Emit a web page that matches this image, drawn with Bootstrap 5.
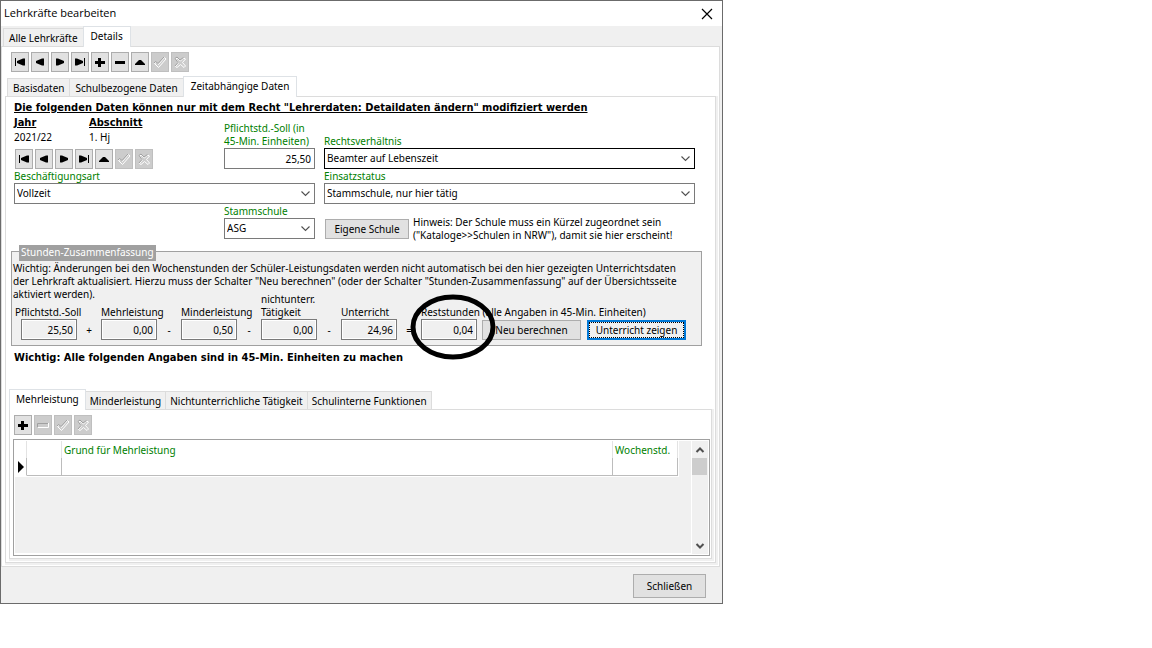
<!DOCTYPE html>
<html lang="de">
<head>
<meta charset="utf-8">
<meta name="viewport" content="width=device-width, initial-scale=1">
<title>Lehrkräfte bearbeiten</title>
<link href="https://cdn.jsdelivr.net/npm/bootstrap@5.3.0/dist/css/bootstrap.min.css" rel="stylesheet">
<style>
  :root { --face: #f0f0f0; --line: #dcdcdc; --edge: #7a7a7a; --btn: #e1e1e1; --btn-edge: #adadad; --green: #008000; }
  body { background: #fff; color: #000; font: 10px/13px "Noto Sans", sans-serif; }
  button, input, select { font: inherit; color: inherit; }
  .dialog { max-width: 723px; border: 1px solid #6b6b6b; background: var(--face); }
  .titlebar { height: 25px; padding: 0 9px 0 3px; background: #fff; }
  .titlebar h1 { font: 11px/23px "Open Sans", sans-serif; margin: 0; }
  .close-x { width: 12px; height: 12px; padding: 0; border: 0; background: none; line-height: 0; }

  /* tab strips */
  .strip { border: 0; align-items: flex-end; padding-left: 3px; height: 20px; flex-wrap: nowrap; }
  .strip.flush { padding-left: 1px; }
  .strip .nav-link { height: 18px; padding: 1px 5px 0; border: 1px solid var(--line); border-bottom: 0; border-radius: 0; margin: 0 0 0 -1px; background: var(--face); color: #000; font-size: 10px; line-height: 16px; white-space: nowrap; }
  .strip.flush .nav-link { padding: 1px 4px 0; }
  .strip .nav-link.active { height: 21px; padding: 0 7px 2px; background: #fff; color: #000; position: relative; z-index: 1; margin-bottom: -1px; }
  .strip.flush .nav-link.active { padding: 0 6px 2px; }
  .pane { border: 1px solid var(--line); background: #fff; }
  .pane-main { margin-right: 2px; padding: 5px 3px 3px; }
  .pane-main > .tools { margin: 0 6px 4px; }
  .pane-time { padding: 3px 3px 3px; box-shadow: 1px 1px 0 1px var(--face); clip-path: inset(0 -2px -2px 0); }
  .pane-load { padding: 5px 1px 2px 3px; box-shadow: 1px 1px 0 1px var(--face); clip-path: inset(0 -2px -2px 0); }

  /* record navigator */
  .tools { gap: 2px; }
  .form-rows .tools, .pane-load .tools { padding-left: 1px; }
  .tool { width: 18px; height: 20px; padding: 0; border: 1px solid var(--btn-edge); background: var(--btn); line-height: 0; display: flex; align-items: center; justify-content: center; }
  .tool:disabled { background: #ccc; border-color: #bfbfbf; }
  .tool svg { width: 16px; height: 16px; flex: none; }

  .strong-line { font: 700 11px/15px "DejaVu Sans Condensed", "Noto Sans", sans-serif; margin: 0 5px; }
  .years { line-height: 15px; border-collapse: collapse; margin-bottom: 4px; }
  .years th { width: 75px; padding: 0; text-decoration: underline; font: 700 11px/15px "DejaVu Sans Condensed", "Noto Sans", sans-serif; }
  .years td { padding: 0; }
  .form-rows { display: grid; grid-template-columns: 210px 91px 1fr; row-gap: 1px; margin: 0 17px 9px 5px; }
  .form-rows > .wide { grid-column: span 2; }
  .form-rows > .second { grid-column: 2; }
  .form-rows > .third { margin-left: 9px; }
  .green { color: var(--green); display: block; }
  .field { display: block; width: 100%; height: 21px; border: 1px solid var(--edge); border-radius: 0; padding: 0 3px; background-color: #fff; text-align: right; }
  select.field { text-align: left; padding: 0 18px 0 2px; line-height: 19px; color: #000; font-size: 10px; background-position: right 3px center; background-size: 11px 11px; background-image: url("data:image/svg+xml,%3Csvg xmlns='http://www.w3.org/2000/svg' viewBox='0 0 11 11'%3E%3Cpath fill='none' stroke='%23505050' stroke-width='1.1' d='M1.5 3.500l4 4 4-4'/%3E%3C/svg%3E"); }
  select.field.focused { border-color: #000; }
  .push { height: 20px; border: 1px solid var(--btn-edge); border-radius: 0; background: var(--btn); padding: 0; line-height: 16px; color: #000; font-size: 10px; white-space: nowrap; }
  .push.default { border: 2px solid #0078d7; outline: 1px dotted #000; outline-offset: -3px; line-height: 14px; }
  .own-school { width: 84px; margin: 3px 4px 0 1px; }
  .hint-cell { padding-top: 11px; }

  /* summary of hours */
  .summary { position: relative; border: 1px solid #a0a0a0; background: var(--face); padding: 10px 1px 5px; margin: 0 10px 4px 2px; }
  .summary legend { position: absolute; top: -7px; left: 7px; float: none; width: auto; margin: 0; padding: 0 2px 1px; background: #a0a0a0; color: #fff; font-size: 10px; line-height: 15px; }
  .sum-row { margin: -8px 14px 0 8px; }
  .sum-item { width: 56px; position: relative; }
  .sum-item label { display: block; white-space: nowrap; }
  .sum-item label.outdent { margin-left: -6px; }
  .sum-item .field { background: var(--face); box-shadow: inset 0 0 0 1px #fff; }
  .op { width: 24px; text-align: center; line-height: 19px; }
  .ring { position: absolute; left: -11px; top: -12px; width: 86px; height: 66px; pointer-events: none; z-index: 2; }
  .recalc { width: 99px; margin-left: 5px; }
  .show { width: 99px; margin-left: 6px; }

  /* data grid */
  .load-tabs { margin: 24px 0 0; }
  .grid-box { border: 1px solid #a0a0a0; background: #fff; height: 117px; padding: 1px; margin-top: 4px; }
  .grid-area { background: var(--face); border: 1px solid #fff; border-width: 0 1px 1px 0; }
  .data-grid { width: calc(100% - 12px); table-layout: fixed; border-collapse: separate; border-spacing: 0; background: #fff; border-right: 1px solid #fff; border-bottom: 1px solid #fff; }
  .data-grid th { height: 17px; padding: 2px 0 0 2px; font-weight: 400; color: var(--green); border-right: 1px solid #e3e3e3; line-height: 15px; white-space: nowrap; }
  .data-grid td { height: 18px; padding: 0; border-right: 1px solid #bcbcbc; border-bottom: 1px solid #bcbcbc; line-height: 0; }
  .data-grid td.pointer { border-bottom-color: #fff; }
  .c-mark { width: 12px; } .c-no { width: 35px; } .c-std { width: 65px; }
  .vbar { width: 16px; background: var(--face); }
  .vbar .thumb { height: 17px; background: #cdcdcd; width: 15px; }
  .vbar button { border: 0; background: none; padding: 0; width: 16px; height: 17px; line-height: 0; }
  .actions { padding: 7px 16px 5px; }
  .actions .push { width: 73px; height: 24px; }
</style>
</head>
<body>
<svg class="d-none" xmlns="http://www.w3.org/2000/svg">
  <symbol id="i-first" viewBox="0 0 16 16"><path d="M3 4h1v8H3zM13 4.500v7h-2L5 9V7l6-2.500z"/></symbol>
  <symbol id="i-prev" viewBox="0 0 16 16"><path d="M12 4.500v7h-2L4 9V7l6-2.500z"/></symbol>
  <symbol id="i-next" viewBox="0 0 16 16"><path d="M4 4.500v7h2L12 9V7L6 4.500z"/></symbol>
  <symbol id="i-last" viewBox="0 0 16 16"><path d="M12 4h1v8h-1zM3 4.500v7h2L11 9V7L5 4.500z"/></symbol>
  <symbol id="i-plus" viewBox="0 0 16 16"><path d="M6 4h3v3h4v3H9v3H6v-3H3V7h3z"/></symbol>
  <symbol id="i-minus" viewBox="0 0 16 16"><path d="M3 7h10v3H3z"/></symbol>
  <symbol id="i-up" viewBox="0 0 16 16"><path d="M7 6h2l4 4v1H3v-1z"/></symbol>
  <symbol id="i-minus-off" viewBox="0 0 16 16"><path fill="none" stroke="#fff" d="M3 10.500h10.500V6"/><path fill="none" stroke="#a0a0a0" d="M2.500 10v-3.500H13"/></symbol>
  <symbol id="i-check" viewBox="0 0 16 16"><path fill="#ccc" stroke="#fff" d="M2.500 9.500l2-1 2 2 6-7 1.500 1.500-7.500 8.500z"/><path fill="none" stroke="#a0a0a0" d="M2 9l1.500-1.500 2.500 2L12 3"/></symbol>
  <symbol id="i-cross" viewBox="0 0 16 16"><path fill="#ccc" stroke="#fff" d="M3.500 4.500h2l3 2.500 3-3 2 1L10.500 8.500l3 3.500-1.500 1.500-3.500-3-3.500 3-1.500-1L6.500 9z"/><path fill="none" stroke="#a0a0a0" d="M6 8.500l-3-4L5 3l3 3 3.500-2.500M3 12l3-3.500"/></symbol>
</svg>

<main class="dialog">
  <header class="titlebar d-flex align-items-start justify-content-between">
    <h1>Lehrkräfte bearbeiten</h1>
    <button class="close-x align-self-center" type="button" aria-label="Fenster schließen"><svg width="12" height="12" viewBox="0 0 12 12"><path d="M1 1l10 10M11 1L1 11" stroke="#000" stroke-width="1.200"/></svg></button>
  </header>

  <nav class="nav nav-tabs strip" aria-label="Ansicht">
    <button class="nav-link" type="button">Alle Lehrkräfte</button>
    <button class="nav-link active" type="button">Details</button>
  </nav>

  <section class="pane pane-main">
    <div class="tools d-flex" role="toolbar" aria-label="Lehrkraft">
      <button class="tool" type="button" aria-label="Erster"><svg><use href="#i-first"/></svg></button>
      <button class="tool" type="button" aria-label="Voriger"><svg><use href="#i-prev"/></svg></button>
      <button class="tool" type="button" aria-label="Nächster"><svg><use href="#i-next"/></svg></button>
      <button class="tool" type="button" aria-label="Letzter"><svg><use href="#i-last"/></svg></button>
      <button class="tool" type="button" aria-label="Neu"><svg><use href="#i-plus"/></svg></button>
      <button class="tool" type="button" aria-label="Löschen"><svg><use href="#i-minus"/></svg></button>
      <button class="tool" type="button" aria-label="Bearbeiten"><svg><use href="#i-up"/></svg></button>
      <button class="tool" type="button" aria-label="Speichern" disabled><svg><use href="#i-check"/></svg></button>
      <button class="tool" type="button" aria-label="Verwerfen" disabled><svg><use href="#i-cross"/></svg></button>
    </div>

    <nav class="nav nav-tabs strip" aria-label="Daten">
      <button class="nav-link" type="button">Basisdaten</button>
      <button class="nav-link" type="button">Schulbezogene Daten</button>
      <button class="nav-link active" type="button">Zeitabhängige Daten</button>
    </nav>

    <section class="pane pane-time">
      <h2 class="strong-line text-decoration-underline">Die folgenden Daten können nur mit dem Recht "Lehrerdaten: Detaildaten ändern" modifiziert werden</h2>

      <div class="form-rows">
        <div>
          <table class="years">
            <tr><th>Jahr</th><th>Abschnitt</th></tr>
            <tr><td>2021/22</td><td>1. Hj</td></tr>
          </table>
          <div class="tools d-flex" role="toolbar" aria-label="Abschnitt">
            <button class="tool" type="button" aria-label="Erster"><svg><use href="#i-first"/></svg></button>
            <button class="tool" type="button" aria-label="Voriger"><svg><use href="#i-prev"/></svg></button>
            <button class="tool" type="button" aria-label="Nächster"><svg><use href="#i-next"/></svg></button>
            <button class="tool" type="button" aria-label="Letzter"><svg><use href="#i-last"/></svg></button>
            <button class="tool" type="button" aria-label="Bearbeiten"><svg><use href="#i-up"/></svg></button>
            <button class="tool" type="button" aria-label="Speichern" disabled><svg><use href="#i-check"/></svg></button>
            <button class="tool" type="button" aria-label="Verwerfen" disabled><svg><use href="#i-cross"/></svg></button>
          </div>
        </div>
        <div class="align-self-end">
          <label class="green" for="soll">Pflichtstd.-Soll (in<br>45-Min. Einheiten)</label>
          <input class="field" id="soll" type="text" value="25,50">
        </div>
        <div class="third align-self-end">
          <label class="green" for="recht">Rechtsverhältnis</label>
          <select class="form-select field focused" id="recht"><option>Beamter auf Lebenszeit</option></select>
        </div>

        <div class="wide">
          <label class="green" for="art">Beschäftigungsart</label>
          <select class="form-select field" id="art"><option>Vollzeit</option></select>
        </div>
        <div class="third">
          <label class="green" for="einsatz">Einsatzstatus</label>
          <select class="form-select field" id="einsatz"><option>Stammschule, nur hier tätig</option></select>
        </div>

        <div class="second">
          <label class="green" for="schule">Stammschule</label>
          <select class="form-select field" id="schule"><option>ASG</option></select>
        </div>
        <div class="third hint-cell d-flex align-items-start">
          <button class="btn push own-school" type="button">Eigene Schule</button>
          <div>Hinweis: Der Schule muss ein Kürzel zugeordnet sein<br>("Kataloge&gt;&gt;Schulen in NRW"), damit sie hier erscheint!</div>
        </div>
      </div>

      <fieldset class="summary">
        <legend>Stunden-Zusammenfassung</legend>
        <div>Wichtig: Änderungen bei den Wochenstunden der Schüler-Leistungsdaten werden nicht automatisch bei den hier gezeigten Unterrichtsdaten<br>der Lehrkraft aktualisiert. Hierzu muss der Schalter "Neu berechnen" (oder der Schalter "Stunden-Zusammenfassung" auf der Übersichtsseite<br>aktiviert werden).</div>
        <div class="sum-row d-flex align-items-end">
          <div class="sum-item"><label class="outdent" for="s1">Pflichtstd.-Soll</label><input class="field" id="s1" type="text" value="25,50" readonly></div>
          <div class="op">+</div>
          <div class="sum-item"><label for="s2">Mehrleistung</label><input class="field" id="s2" type="text" value="0,00" readonly></div>
          <div class="op">-</div>
          <div class="sum-item"><label for="s3">Minderleistung</label><input class="field" id="s3" type="text" value="0,50" readonly></div>
          <div class="op">-</div>
          <div class="sum-item"><label for="s4">nichtunterr.<br>Tätigkeit</label><input class="field" id="s4" type="text" value="0,00" readonly></div>
          <div class="op">-</div>
          <div class="sum-item"><label for="s5">Unterricht</label><input class="field" id="s5" type="text" value="24,96" readonly></div>
          <div class="op">=</div>
          <div class="sum-item">
            <label for="s6">Reststunden (alle Angaben in 45-Min. Einheiten)</label>
            <input class="field" id="s6" type="text" value="0,04" readonly>
            <svg class="ring" viewBox="0 0 86 66" aria-hidden="true"><ellipse cx="43" cy="33" rx="40" ry="30" fill="none" stroke="#000" stroke-width="5"/></svg>
          </div>
          <button class="btn push recalc" type="button">Neu berechnen</button>
          <button class="btn push default show" type="button">Unterricht zeigen</button>
        </div>
      </fieldset>

      <p class="strong-line">Wichtig: Alle folgenden Angaben sind in 45-Min. Einheiten zu machen</p>

      <div class="load-tabs">
        <nav class="nav nav-tabs strip flush" aria-label="Stundenarten">
          <button class="nav-link active" type="button">Mehrleistung</button>
          <button class="nav-link" type="button">Minderleistung</button>
          <button class="nav-link" type="button">Nichtunterrichliche Tätigkeit</button>
          <button class="nav-link" type="button">Schulinterne Funktionen</button>
        </nav>
        <section class="pane pane-load">
          <div class="tools d-flex" role="toolbar" aria-label="Mehrleistung">
            <button class="tool" type="button" aria-label="Neu"><svg><use href="#i-plus"/></svg></button>
            <button class="tool" type="button" aria-label="Löschen" disabled><svg><use href="#i-minus-off"/></svg></button>
            <button class="tool" type="button" aria-label="Speichern" disabled><svg><use href="#i-check"/></svg></button>
            <button class="tool" type="button" aria-label="Verwerfen" disabled><svg><use href="#i-cross"/></svg></button>
          </div>
          <div class="grid-box d-flex">
            <div class="grid-area flex-fill">
              <table class="data-grid">
                <colgroup><col class="c-mark"><col class="c-no"><col><col class="c-std"></colgroup>
                <thead><tr><th></th><th></th><th>Grund für Mehrleistung</th><th>Wochenstd.</th></tr></thead>
                <tbody><tr><td class="pointer"><svg width="10" height="12" viewBox="0 0 10 12"><path d="M3 0l6 6-6 6z"/></svg></td><td></td><td></td><td></td></tr></tbody>
              </table>
            </div>
            <div class="vbar d-flex flex-column">
              <button type="button" aria-label="Nach oben"><svg width="16" height="16" viewBox="0 0 16 16"><path d="M4.500 10L8 6.500l3.500 3.500" fill="none" stroke="#505050" stroke-width="2"/></svg></button>
              <div class="thumb"></div>
              <button class="mt-auto" type="button" aria-label="Nach unten"><svg width="16" height="16" viewBox="0 0 16 16"><path d="M4.500 6L8 9.500 11.500 6" fill="none" stroke="#505050" stroke-width="2"/></svg></button>
            </div>
          </div>
        </section>
      </div>
    </section>
  </section>

  <footer class="actions d-flex justify-content-end">
    <button class="btn push" type="button">Schließen</button>
  </footer>
</main>
<script src="https://cdn.jsdelivr.net/npm/bootstrap@5.3.0/dist/js/bootstrap.bundle.min.js"></script>
</body>
</html>
